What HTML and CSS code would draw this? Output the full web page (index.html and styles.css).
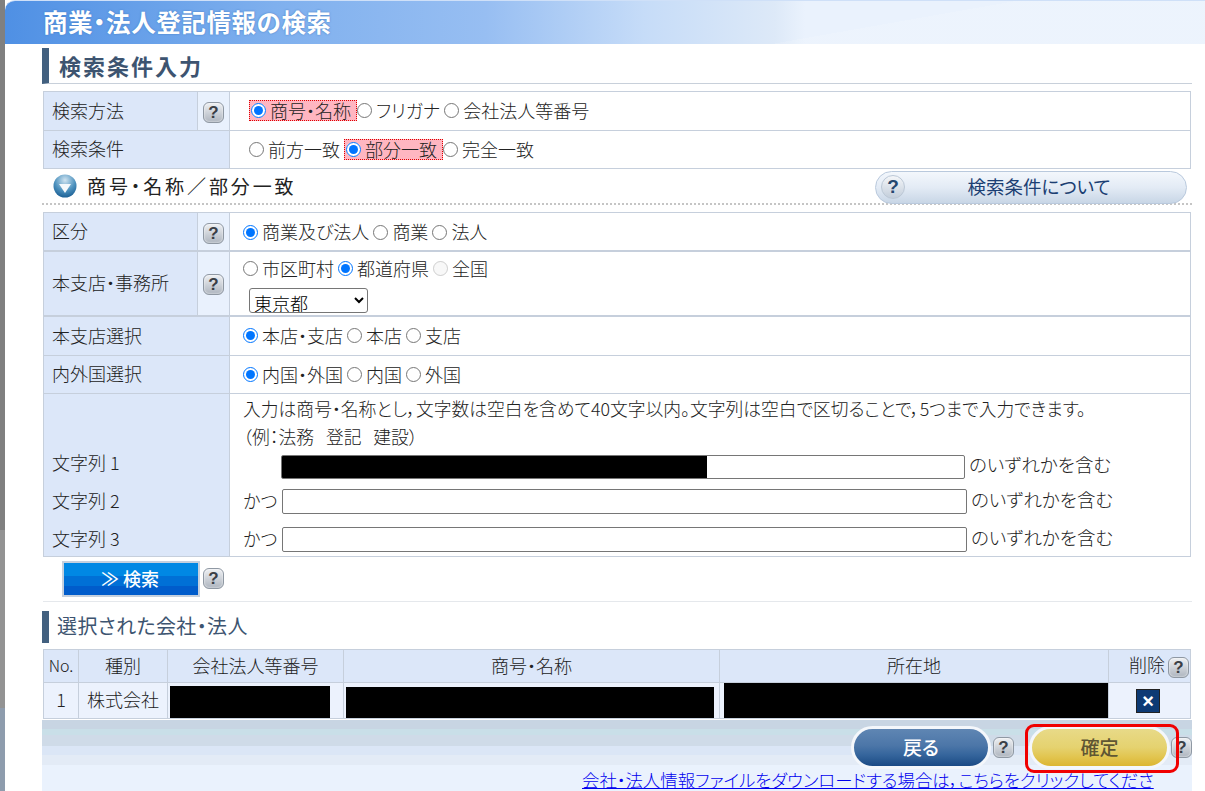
FILE: index.html
```html
<!DOCTYPE html>
<html lang="ja">
<head>
    <meta charset="UTF-8">
    <meta name="viewport" content="width=device-width, initial-scale=1.0">
    <title>商業・法人登記情報の検索</title>
    <link rel="stylesheet" href="styles.css">
</head>
<body>
<div class="strip"></div>
<div class="page">
    <div class="banner"><h1>商業・法人登記情報の検索</h1></div>

    <div class="content">
        <h2 class="heading">検索条件入力</h2>

        <table class="form-table method-table">
            <tr class="row-a">
                <th class="label">検索方法</th>
                <td class="help-cell"><span class="help">?</span></td>
                <td class="value pad-wide">
                    <label class="opt active"><input type="radio" name="method" checked>商号・名称</label><label class="opt"><input type="radio" name="method">フリガナ</label><label class="opt"><input type="radio" name="method">会社法人等番号</label>
                </td>
            </tr>
            <tr>
                <th class="label" colspan="2">検索条件</th>
                <td class="value pad-wide">
                    <label class="opt"><input type="radio" name="match">前方一致</label><label class="opt active"><input type="radio" name="match" checked>部分一致</label><label class="opt"><input type="radio" name="match">完全一致</label>
                </td>
            </tr>
        </table>

        <div class="subhead">
            <span class="subhead-title">
                <svg class="down-icon" width="24" height="24" viewBox="0 0 24 24">
                    <defs>
                        <radialGradient id="ball" cx="50%" cy="25%" r="80%">
                            <stop offset="0" stop-color="#cfe3f0"/>
                            <stop offset="0.55" stop-color="#4f93bf"/>
                            <stop offset="1" stop-color="#14588f"/>
                        </radialGradient>
                    </defs>
                    <circle cx="12" cy="12" r="11.5" fill="url(#ball)"/>
                    <path d="M6 10h12l-6 9z" fill="#f4f8fb"/>
                </svg>
                商号・名称／部分一致
            </span>
            <button class="about-button"><span class="about-q">?</span>検索条件について</button>
        </div>

        <table class="form-table detail-table">
            <tr class="row-first">
                <th class="label">区分</th>
                <td class="help-cell"><span class="help">?</span></td>
                <td class="value">
                    <label class="opt"><input type="radio" name="kubun" checked>商業及び法人</label><label class="opt"><input type="radio" name="kubun">商業</label><label class="opt"><input type="radio" name="kubun">法人</label>
                </td>
            </tr>
            <tr class="row-area">
                <th class="label">本支店・事務所</th>
                <td class="help-cell"><span class="help">?</span></td>
                <td class="value">
                    <div class="area-radios">
                        <label class="opt"><input type="radio" name="area">市区町村</label><label class="opt"><input type="radio" name="area" checked>都道府県</label><label class="opt"><input type="radio" name="area" disabled>全国</label>
                    </div>
                    <select class="pref"><option>東京都</option></select>
                </td>
            </tr>
            <tr class="row-plain row-tall">
                <th class="label" colspan="2">本支店選択</th>
                <td class="value">
                    <label class="opt"><input type="radio" name="shiten" checked>本店・支店</label><label class="opt"><input type="radio" name="shiten">本店</label><label class="opt"><input type="radio" name="shiten">支店</label>
                </td>
            </tr>
            <tr class="row-plain">
                <th class="label" colspan="2">内外国選択</th>
                <td class="value">
                    <label class="opt"><input type="radio" name="naigai" checked>内国・外国</label><label class="opt"><input type="radio" name="naigai">内国</label><label class="opt"><input type="radio" name="naigai">外国</label>
                </td>
            </tr>
            <tr class="row-note">
                <th class="label" colspan="2"></th>
                <td class="value">
                    <div class="note">入力は商号・名称とし，文字数は空白を含めて40文字以内。文字列は空白で区切ることで，5つまで入力できます。</div>
                    <div class="note">（例：法務&nbsp;&nbsp;&nbsp;登記&nbsp;&nbsp;&nbsp;建設）</div>
                </td>
            </tr>
            <tr class="row-str str-one">
                <th class="label" colspan="2">文字列 1</th>
                <td class="value">
                    <div class="str-line"><span class="katsu"></span><input class="str-input redacted" type="text"><span class="str-tail">のいずれかを含む</span></div>
                </td>
            </tr>
            <tr class="row-str str-two">
                <th class="label" colspan="2">文字列 2</th>
                <td class="value">
                    <div class="str-line shifted"><span class="katsu">かつ</span><input class="str-input" type="text"><span class="str-tail">のいずれかを含む</span></div>
                </td>
            </tr>
            <tr class="row-str str-three">
                <th class="label" colspan="2">文字列 3</th>
                <td class="value">
                    <div class="str-line shifted"><span class="katsu">かつ</span><input class="str-input" type="text"><span class="str-tail">のいずれかを含む</span></div>
                </td>
            </tr>
        </table>

        <div class="search-row">
            <button class="search-button">≫ 検索</button>
            <span class="help">?</span>
        </div>

        <h3 class="heading small">選択された会社・法人</h3>

        <table class="form-table result-table">
            <tr class="result-head">
                <th class="c-no">No.</th>
                <th class="c-kind">種別</th>
                <th class="c-num">会社法人等番号</th>
                <th class="c-name">商号・名称</th>
                <th class="c-addr">所在地</th>
                <th class="c-del">削除<span class="help">?</span></th>
            </tr>
            <tr class="result-row">
                <td>1</td>
                <td>株式会社</td>
                <td class="cell-black"><div class="black b-num"></div></td>
                <td class="cell-black"><div class="black b-name"></div></td>
                <td class="cell-black"><div class="black b-addr"></div></td>
                <td><button class="del-button">×</button></td>
            </tr>
        </table>
    </div>

    <div class="footer-band">
        <div class="footer-buttons">
            <button class="pill back">戻る</button>
            <span class="help">?</span>
            <span class="confirm-wrap">
                <button class="pill confirm">確定</button>
                <span class="red-box"></span>
            </span>
            <span class="help">?</span>
        </div>
        <div class="footer-link"><a href="#">会社・法人情報ファイルをダウンロードする場合は，こちらをクリックしてくださ</a></div>
    </div>
</div>
</body>
</html>
```

FILE: styles.css
```css
html, body {
    margin: 0;
    padding: 0;
    height: 791px;
    overflow: hidden;
    background: white;
}

body {
    display: flex;
    font-family: "Noto Sans CJK JP", "Noto Sans", sans-serif;
    font-size: 18px;
    font-weight: 300;
    line-height: 1.3;
    color: #222;
    font-feature-settings: "palt";
}

.strip {
    width: 5px;
    flex: none;
    background: linear-gradient(to bottom, #808080 0, #808080 530px, #939393 530px, #939393 708px, #8e9cad 708px);
}

.page {
    flex: 1;
    min-width: 0;
}

/* Top banner */
.banner {
    height: 44px;
    border-top-left-radius: 10px;
    background:
        linear-gradient(170deg, rgba(255,255,255,0) 0, rgba(255,255,255,0) 70%, rgba(255,255,255,0.12) 70%),
        linear-gradient(to right, #4f90e4 0, #7fb0ee 270px, #97bef2 480px, #c6dcf8 640px, #dde9f8 770px, #eaf2fd 800px);
    border-top: 1px solid #cfe0f8;
    box-sizing: border-box;
}

.banner h1 {
    margin: 0;
    padding-left: 38px;
    font-size: 24.5px;
    line-height: 41px;
    font-weight: 700;
    color: white;
    text-shadow: 0 0 2px #3f78c0;
    letter-spacing: 0.6px;
}

.content {
    padding-left: 38px;
    width: 1149px;
}

/* Section headings */
.heading {
    margin: 4px 0 0 -1px;
    height: 36px;
    box-sizing: border-box;
    border-left: 7px solid #42607f;
    border-bottom: 1px solid #c8d0da;
    padding-left: 10px;
    font-size: 22px;
    line-height: 34px;
    font-weight: 700;
    color: #3d5470;
    letter-spacing: 2px;
}

.heading.small {
    margin-top: 9px;
    height: 32px;
    width: 260px;
    border-bottom: none;
    padding-left: 8px;
    font-size: 20px;
    line-height: 30px;
    font-weight: 400;
    letter-spacing: 0.4px;
}

/* Tables */
.form-table {
    border-collapse: collapse;
    table-layout: fixed;
    width: 1148px;
}

.form-table th, .form-table td {
    border: 1px solid #c6cfdc;
    padding: 0;
    font-weight: 300;
}

.label {
    width: 154px;
    background: #dce7f9;
    text-align: left;
    padding: 0 0 1px 8px !important;
    box-sizing: border-box;
}

.help-cell {
    width: 31px;
    background: #e9f1fd;
    text-align: center;
}

.value {
    background: white;
    padding: 0 0 4px 13px !important;
}

.value.pad-wide {
    padding-left: 19px !important;
}

.method-table {
    margin-top: 7px;
}

.method-table tr {
    height: 38px;
}

.method-table .row-a {
    height: 39px;
}

.detail-table .row-first {
    height: 38px;
}

.row-first .value {
    padding-bottom: 2px !important;
}

.row-first th, .row-first td,
.row-area th, .row-area td {
    border-bottom-width: 2px;
}

.row-area {
    height: 65px;
}

.row-area .value {
    padding: 3px 0 0 13px !important;
}

.row-plain {
    height: 38px;
}

.row-plain.row-tall {
    height: 40px;
}

.row-note {
    height: 56px;
}

.row-note .value {
    padding-bottom: 0 !important;
}

.row-note th, .row-note td,
.row-str th, .row-str td {
    border-top: none;
    border-bottom: none;
}

.detail-table {
    border-bottom: 1px solid #c6cfdc;
}

.str-one {
    height: 34px;
}

.str-two {
    height: 38px;
}

.str-three {
    height: 34px;
}

.str-one th {
    padding-bottom: 8px !important;
}

.str-two th {
    padding-bottom: 5px !important;
}

.str-one .value {
    padding-bottom: 0 !important;
}

.str-two .value {
    padding-bottom: 3px !important;
}

.str-three .value {
    padding: 2px 0 0 13px !important;
}

/* Radio options */
.opt {
    display: inline-flex;
    align-items: center;
    height: 21px;
    box-sizing: border-box;
    padding-right: 4px;
    vertical-align: middle;
    white-space: nowrap;
}

.opt input {
    width: 15px;
    height: 15px;
    margin: 0 4px 0 0;
    flex: none;
}

.opt.active {
    background: #ffb6c1;
    outline: 1px dotted #e00000;
    outline-offset: -1px;
    padding: 0 6px 0 2px;
}

.area-radios {
    margin-top: -1px;
}

.pref {
    display: block;
    width: 119px;
    height: 25px;
    margin: 9px 0 0 6px;
    font-family: inherit;
    font-size: 18px;
    font-weight: 300;
    background: white;
    color: #000;
    border: 1px solid #767676;
    border-radius: 3px;
    padding: 0;
}

.note {
    line-height: 28px;
    font-size: 17.8px;
    white-space: nowrap;
}

.str-line {
    display: flex;
    align-items: center;
}

.katsu {
    width: 38px;
    flex: none;
    padding-bottom: 2px;
}

.str-input {
    width: 684px;
    height: 24px;
    box-sizing: border-box;
    border: 1px solid #767676;
    border-radius: 2px;
    padding: 0;
    margin: 0 4px 0 0;
    background: white;
}

.str-line.shifted .str-input {
    margin-left: 1px;
    width: 685px;
    height: 25px;
}

.str-tail {
    font-size: 18.5px;
    white-space: nowrap;
    padding-bottom: 5px;
}

.redacted {
    background: linear-gradient(#000, #000) no-repeat 0 0 / 425px 100%, white;
}

/* Help icon */
.help {
    display: inline-block;
    width: 21px;
    height: 21px;
    box-sizing: border-box;
    border: 1px solid #8f98a3;
    border-radius: 6px;
    background: linear-gradient(to bottom, #eef0f3, #aeb5bf);
    box-shadow: inset 0 0 2px white;
    color: #3a3f46;
    font-family: "Liberation Sans", sans-serif;
    font-size: 17px;
    font-weight: 700;
    line-height: 19px;
    text-align: center;
    vertical-align: middle;
}

/* Sub heading row */
.subhead {
    display: flex;
    justify-content: space-between;
    align-items: flex-start;
    height: 36px;
    margin-left: -1px;
    padding-top: 2px;
    box-sizing: border-box;
    border-bottom: 2px dotted #c5c5c5;
    margin-bottom: 7px;
}

.subhead-title {
    display: flex;
    align-items: center;
    gap: 10px;
    padding-left: 11px;
    height: 30px;
    font-size: 19px;
    font-weight: 400;
    letter-spacing: 2.9px;
}

.about-button {
    position: relative;
    width: 312px;
    height: 33px;
    margin-right: 5px;
    border: 1px solid #b9c9dd;
    border-radius: 17px;
    background: linear-gradient(to bottom, #f3f7fc 0, #e3ebf5 50%, #c8d6e6 100%);
    font-family: inherit;
    font-size: 18.5px;
    font-weight: 400;
    color: #1c3f73;
    padding: 0 0 4px 16px;
    font-feature-settings: "palt";
}

.about-q {
    position: absolute;
    left: 5px;
    top: 3px;
    width: 24px;
    height: 24px;
    border-radius: 50%;
    background: linear-gradient(to bottom, #f4f6f9, #c3cedb);
    border: 1px solid #bcc8d6;
    box-sizing: border-box;
    font-family: "Liberation Sans", sans-serif;
    font-size: 19px;
    font-weight: 700;
    line-height: 22px;
    color: #24476f;
}

/* Search button */
.search-row {
    display: flex;
    align-items: center;
    gap: 3px;
    height: 45px;
    padding-left: 19px;
    box-sizing: border-box;
    border-bottom: 1px solid #e5e8ec;
}

.search-button {
    width: 138px;
    height: 36px;
    border: 2px solid #c5d0de;
    background: linear-gradient(to bottom, #0088e4 0, #0088e4 40%, #0070d6 40%, #0070d6 72%, #005ccb 72%);
    color: white;
    font-family: inherit;
    font-size: 18px;
    font-weight: 500;
    padding: 0 2px 2px 0;
    font-feature-settings: "palt";
}

/* Result table */
.result-table {
    margin-top: 6px;
}

.c-no { width: 34px; }
.c-kind { width: 88px; }
.c-num { width: 175px; }
.c-name { width: 375px; }
.c-addr { width: 388px; }

.result-head {
    height: 33px;
}

.result-head th {
    background: #dce7f9;
    text-align: center;
    white-space: nowrap;
}

.result-head .c-del {
    text-align: right;
    padding-right: 1px;
}

.c-no {
    font-size: 16px;
}

.c-del .help {
    margin-left: 3px;
}

.result-row {
    height: 35px;
}

.result-row td {
    background: #ecf2fd;
    text-align: center;
    white-space: nowrap;
}

.result-row .cell-black {
    vertical-align: bottom;
}

.black {
    background: black;
    margin-left: 2px;
}

.b-num {
    width: 160px;
    height: 32px;
}

.b-name {
    width: 368px;
    height: 31px;
}

.b-addr {
    width: 385px;
    height: 35px;
    margin-left: 4px;
}

.del-button {
    width: 24px;
    height: 24px;
    margin-right: 3px;
    border: 1px solid #222;
    background: #0d3a74;
    color: white;
    font-family: "Liberation Sans", sans-serif;
    font-size: 20px;
    font-weight: 700;
    line-height: 20px;
    padding: 0;
    vertical-align: middle;
}

/* Footer band */
.footer-band {
    width: 1150px;
    margin: 1px 0 0 37px;
    height: 72px;
    background: linear-gradient(to bottom,
        #c8d5e3 0, #c8d5e3 9px,
        #c9dfe8 9px, #c9dfe8 15px,
        #cfdbe8 15px, #cfdbe8 26px,
        #dbe6f6 26px, #dbe6f6 35px,
        #e3ebf6 35px, #e3ebf6 45px,
        #eaf2fd 45px);
}

.footer-buttons {
    display: flex;
    justify-content: flex-end;
    align-items: center;
    height: 51px;
    padding-top: 4px;
    box-sizing: border-box;
}

.footer-buttons .help {
    margin: 0 2px;
}

.footer-buttons > .help:last-child {
    margin: 0 0 0 1px;
}

.pill {
    width: 141px;
    height: 43px;
    border: 3px solid #f4f7fb;
    border-radius: 22px;
    font-family: inherit;
    font-size: 19px;
    font-weight: 500;
    padding: 0 0 2px 0;
    font-feature-settings: "palt";
}

.back {
    width: 140px;
    background: linear-gradient(to bottom, #5f86b3 0, #4c76a8 45%, #35659c 70%, #1b4a84 100%);
    color: white;
}

.confirm {
    background: linear-gradient(to bottom, #e8da88 0, #e5d26f 50%, #e2c550 75%, #dcb631 100%);
    color: #5f5633;
    margin-left: 13px;
    display: block;
}

.confirm-wrap {
    position: relative;
    display: block;
}

.red-box {
    position: absolute;
    left: 9px;
    top: -2px;
    width: 154px;
    height: 49px;
    box-sizing: border-box;
    border: 3px solid #f00000;
    border-radius: 9px;
}

.footer-link {
    padding-left: 540px;
    margin-top: -1px;
    font-size: 17.4px;
    line-height: 19px;
    white-space: nowrap;
}

.footer-link a {
    color: #0000ee;
}
```
